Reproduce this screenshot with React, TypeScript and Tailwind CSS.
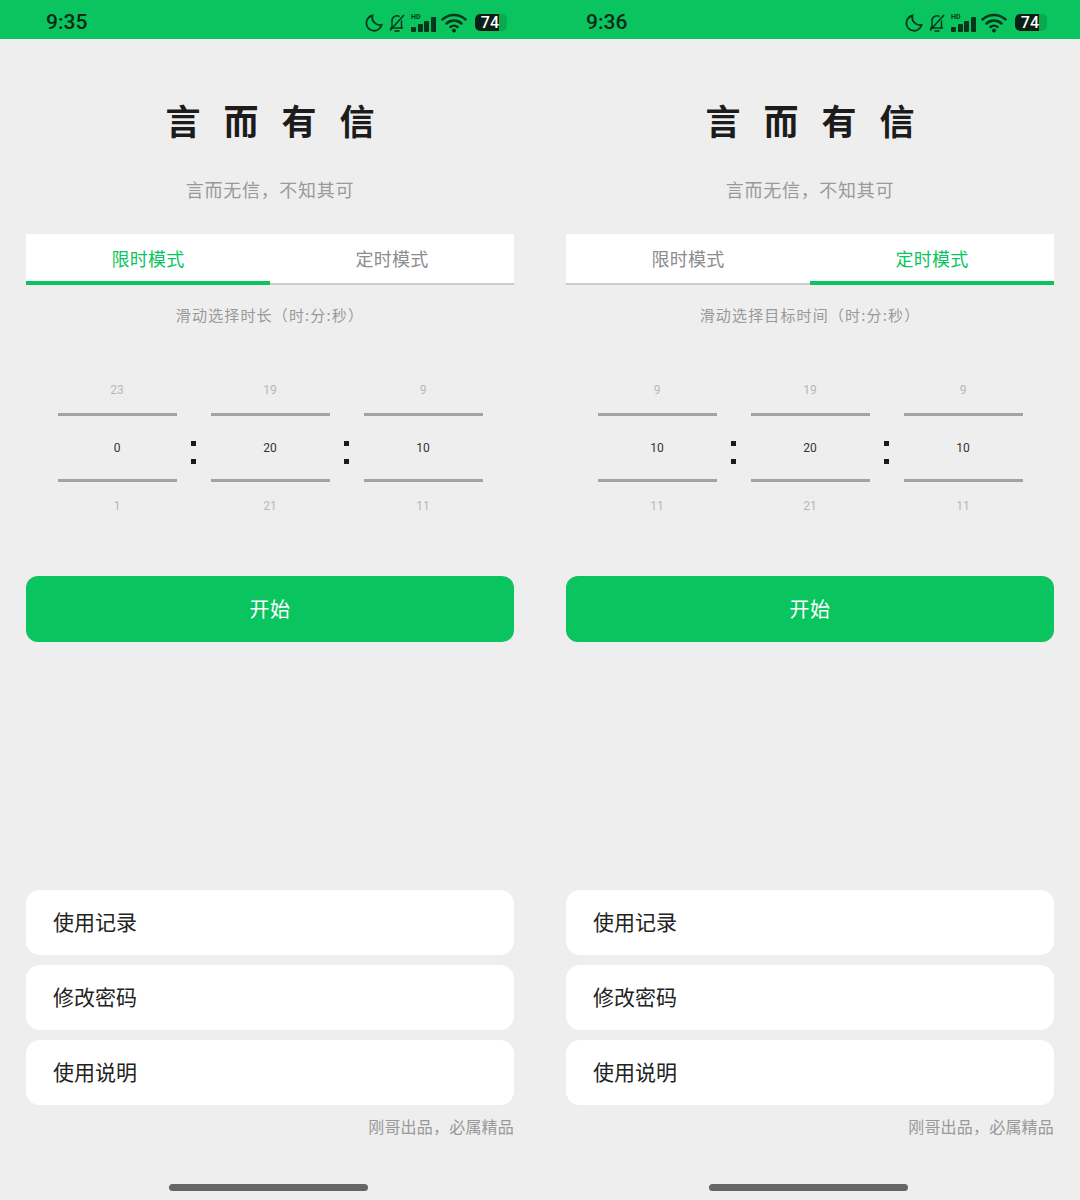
const FONT = { fontFamily: '"Noto Sans CJK SC", "Noto Sans", sans-serif' }

function StatusIcons() {
  return (
    <div className="flex items-center text-[#07361c]">
      {/* moon */}
      <svg width="18" height="18" viewBox="0 0 18 18" fill="none" stroke="currentColor" strokeWidth="1.8" className="mr-[5px]">
        <path d="M7.500 1.500a7.700 7.700 0 1 0 9 9.500A7.800 7.800 0 0 1 7.500 1.500z" />
      </svg>
      {/* muted bell */}
      <svg width="18" height="20" viewBox="0 0 18 20" fill="none" stroke="currentColor" strokeWidth="1.5" className="mr-[5px]">
        <path d="M2 15h13M4 14.500V7.500a4.800 4.800 0 0 1 7.600-3.800M13.500 7.500v7M6.500 18h5M2 17.500 16 2" />
      </svg>
      {/* signal */}
      <div className="relative mr-[4px] flex h-[20px] w-[26px] items-end gap-[1.500px] pb-[1px]">
        <span className="absolute left-0 top-0 text-[7px] font-bold leading-[8px]" style={{ fontFamily: 'Roboto, sans-serif' }}>HD</span>
        <span className="h-[5px] w-[5px] rounded-[1px] bg-current" />
        <span className="h-[8px] w-[5px] rounded-[1px] bg-current" />
        <span className="h-[11px] w-[5px] rounded-[1px] bg-current" />
        <span className="h-[15px] w-[5px] rounded-[1px] bg-current" />
      </div>
      {/* wifi */}
      <svg width="26" height="20" viewBox="0 0 26 20" fill="none" stroke="currentColor" strokeWidth="2.400" strokeLinecap="round" className="mr-[8px]">
        <path d="M1.500 6.500c6.500-6 16.500-6 23 0M5.500 10.500c4.300-4 10.700-4 15 0M9.500 14c2-1.800 5-1.800 7 0" />
        <circle cx="13" cy="17.500" r="2" fill="currentColor" stroke="none" />
      </svg>
      {/* battery */}
      <div className="relative flex h-[17px] w-[32px] items-center overflow-hidden rounded-[5px] bg-[#0aa851]">
        <div className="flex h-full w-[24px] items-center justify-end rounded-l-[5px] bg-[#0b1f14] text-[16px] font-medium leading-none text-white" style={{ fontFamily: 'Roboto, sans-serif' }}>
          74
        </div>
      </div>
    </div>
  )
}

function Wheel({ top, value, bottom }: { top: string; value: string; bottom: string }) {
  return (
    <div className="flex w-[119px] flex-col items-center" style={{ fontFamily: 'Roboto, sans-serif' }}>
      <div className="flex h-[44px] w-full items-center justify-center border-b-[3px] border-[#a3a3a3] pb-[6px] text-[12px] text-[#b8b8b8]">
        {top}
      </div>
      <div className="flex h-[66px] w-full items-center justify-center border-b-[3px] border-[#a3a3a3] text-[12px] text-[#333333]">
        {value}
      </div>
      <div className="flex h-[48px] w-full items-center justify-center text-[12px] text-[#b8b8b8]">{bottom}</div>
    </div>
  )
}

function Colon() {
  return (
    <div className="flex w-[34px] flex-col items-center gap-[13px] pt-[69px]">
      <span className="h-[5px] w-[5px] bg-[#1a1a1a]" />
      <span className="h-[5px] w-[5px] bg-[#1a1a1a]" />
    </div>
  )
}

function Phone({ time, mode, hint, wheels }: { time: string; mode: 0 | 1; hint: string; wheels: string[][] }) {
  const tabs = ['限时模式', '定时模式']
  return (
    <div className="flex h-[1200px] w-[540px] flex-col bg-[#eeeeee]" style={FONT}>
      <div className="flex h-[39px] items-center justify-between bg-[#0ac45f] pl-[46px] pr-[33px] pt-[6px]">
        <span className="text-[21px] font-medium text-[#0c2a18]" style={{ fontFamily: 'Roboto, sans-serif' }}>{time}</span>
        <StatusIcons />
      </div>

      <h1 className="mt-[54px] h-[54px] pl-[23px] text-center text-[35px] font-bold leading-[54px] tracking-[23px] text-[#1c1c1c]">言而有信</h1>
      <p className="mt-[30px] h-[24px] text-center text-[18px] leading-[24px] tracking-[0.7px] text-[#999999]">言而无信，不知其可</p>

      <div className="mx-[26px] mt-[33px] flex h-[51px] bg-white">
        {tabs.map((tab, i) => (
          <div
            key={tab}
            className={
              i === mode
                ? 'flex flex-1 items-center justify-center border-b-4 border-[#0ac45f] pt-[2px] text-[18px] tracking-[0.3px] text-[#0ac45f]'
                : 'flex flex-1 items-center justify-center border-b-2 border-[#cccccc] pb-[2px] pt-[2px] text-[18px] tracking-[0.3px] text-[#8c8c8c]'
            }
          >
            {tab}
          </div>
        ))}
      </div>

      <p className="mt-[18px] h-[24px] text-center text-[15px] leading-[24px] tracking-[1.150px] text-[#999999]">{hint}</p>

      <div className="mt-[45px] flex justify-center">
        <Wheel top={wheels[0][0]} value={wheels[0][1]} bottom={wheels[0][2]} />
        <Colon />
        <Wheel top={wheels[1][0]} value={wheels[1][1]} bottom={wheels[1][2]} />
        <Colon />
        <Wheel top={wheels[2][0]} value={wheels[2][1]} bottom={wheels[2][2]} />
      </div>

      <button className="mx-[26px] mt-[46px] h-[66px] rounded-[12px] bg-[#0ac45f] text-[20px] tracking-[0.5px] text-white">开始</button>

      <div className="mx-[26px] mt-[248px] flex flex-col gap-[10px]">
        {['使用记录', '修改密码', '使用说明'].map((item) => (
          <div key={item} className="flex h-[65px] items-center rounded-[14px] bg-white pb-[2px] pl-[27px] text-[21px] text-[#222222]">
            {item}
          </div>
        ))}
      </div>

      <p className="mx-[26px] mt-[9px] h-[24px] text-right text-[16px] leading-[24px] tracking-[0.2px] text-[#999999]">刚哥出品，必属精品</p>

      <div className="ml-[169px] mt-[46px] h-[7px] w-[199px] rounded-full bg-[#666666]" />
    </div>
  )
}

export default function App() {
  return (
    <div className="flex h-[1200px] w-[1080px] overflow-hidden">
      <Phone
        time="9:35"
        mode={0}
        hint="滑动选择时长（时:分:秒）"
        wheels={[['23', '0', '1'], ['19', '20', '21'], ['9', '10', '11']]}
      />
      <Phone
        time="9:36"
        mode={1}
        hint="滑动选择目标时间（时:分:秒）"
        wheels={[['9', '10', '11'], ['19', '20', '21'], ['9', '10', '11']]}
      />
    </div>
  )
}
